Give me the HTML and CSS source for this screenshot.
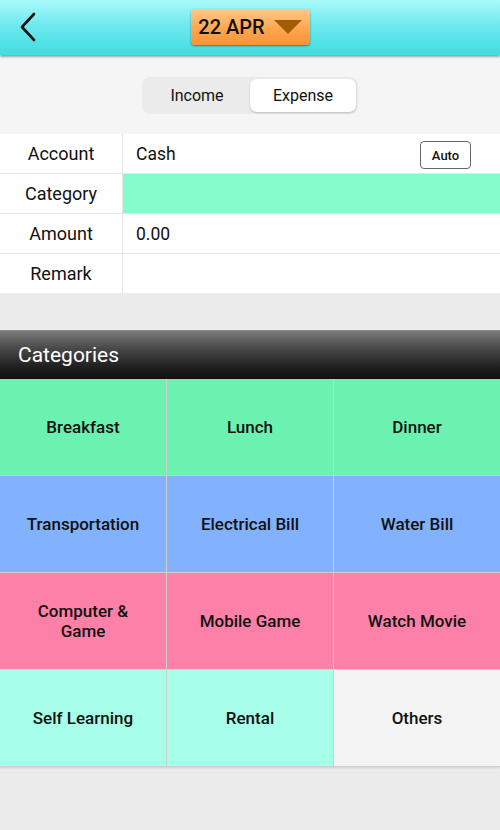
FILE: index.html
```html
<!DOCTYPE html>
<html>
<head>
<meta charset="utf-8">
<link rel="stylesheet" href="styles.css">
</head>
<body>
<div class="app">
  <header class="topbar">
    <div class="back">
      <svg width="20" height="30" viewBox="0 0 20 30"><path d="M16 2 L4 15 L16 28" fill="none" stroke="#111" stroke-width="2.6" stroke-linecap="round" stroke-linejoin="round"/></svg>
    </div>
    <div class="datebtn">
      <span>22 APR</span>
      <svg width="28" height="16" viewBox="0 0 28 16"><polygon points="0,1 28,1 14,15" fill="#a15d00"/></svg>
    </div>
  </header>
  <div class="segwrap">
    <div class="seg">
      <div class="segitem">Income</div>
      <div class="segitem active">Expense</div>
    </div>
  </div>
  <div class="form">
    <div class="row"><div class="label">Account</div><div class="value">Cash<span class="auto">Auto</span></div></div>
    <div class="row"><div class="label">Category</div><div class="value green"></div></div>
    <div class="row"><div class="label">Amount</div><div class="value">0.00</div></div>
    <div class="row last"><div class="label">Remark</div><div class="value"></div></div>
  </div>
  <div class="cathead">Categories</div>
  <div class="grid">
    <div class="cell c-green">Breakfast</div>
    <div class="cell c-green">Lunch</div>
    <div class="cell c-green">Dinner</div>
    <div class="cell c-blue">Transportation</div>
    <div class="cell c-blue">Electrical Bill</div>
    <div class="cell c-blue">Water Bill</div>
    <div class="cell c-pink">Computer &amp;<br>Game</div>
    <div class="cell c-pink">Mobile Game</div>
    <div class="cell c-pink">Watch Movie</div>
    <div class="cell c-mint">Self Learning</div>
    <div class="cell c-mint">Rental</div>
    <div class="cell c-gray">Others</div>
  </div>
</div>
</body>
</html>
```

FILE: styles.css
```css
* { box-sizing: border-box; }
html, body { margin: 0; padding: 0; }
body {
  width: 500px;
  height: 830px;
  background: #ebebeb;
  font-family: Roboto, "Liberation Sans", sans-serif;
  color: #111;
  overflow: hidden;
}
.app { width: 500px; }
.topbar {
  height: 55px;
  background: linear-gradient(to bottom, #a9fafa 0%, #6fe9ee 45%, #3fdde2 100%);
  box-shadow: 0 2px 2px rgba(0,0,0,0.35);
  display: flex;
  align-items: center;
  justify-content: center;
  position: relative;
  z-index: 2;
}
.back {
  position: absolute;
  left: 18px;
  top: 12px;
}
.datebtn {
  margin-top: -2px;
  width: 119px;
  height: 36px;
  border-radius: 4px;
  background: linear-gradient(to bottom, #ffc98a 0%, #ffa650 55%, #fb9235 100%);
  box-shadow: 0 1px 2px rgba(0,0,0,0.45);
  display: flex;
  align-items: center;
  justify-content: center;
  gap: 9px;
  font-size: 20px;
  font-weight: 500;
  color: #111;
}
.datebtn svg { margin-top: 1px; }
.segwrap {
  background: #f5f5f5;
  height: 79px;
  display: flex;
  justify-content: center;
  padding-top: 22px;
}
.seg {
  width: 216px;
  height: 37px;
  background: #ebebeb;
  border-radius: 8px;
  display: flex;
  padding: 2px;
}
.segitem {
  flex: 1;
  display: flex;
  align-items: center;
  justify-content: center;
  font-size: 16px;
  color: #111;
  border-radius: 7px;
}
.segitem.active {
  background: #fff;
  box-shadow: 0 1px 2px rgba(0,0,0,0.2);
}
.form {
  background: #fff;
}
.row {
  display: flex;
  height: 40px;
  border-bottom: 1px solid #e6e6e6;
}
.row.last { border-bottom: none; height: 39px; }
.label {
  width: 123px;
  border-right: 1px solid #e6e6e6;
  display: flex;
  align-items: center;
  justify-content: center;
  font-size: 18px;
}
.value {
  flex: 1;
  display: flex;
  align-items: center;
  padding-left: 13px;
  font-size: 17.5px;
  position: relative;
}
.value.green { background: #85fdca; }
.auto {
  position: absolute;
  left: 297px;
  top: 7px;
  width: 51px;
  height: 28px;
  border: 1.5px solid #666;
  border-radius: 4px;
  font-size: 13px;
  font-weight: 500;
  display: flex;
  align-items: center;
  justify-content: center;
}
.cathead {
  margin-top: 37px;
  height: 49px;
  background: linear-gradient(to bottom, #7a7a7a 0%, #4a4a4a 35%, #1f1f1f 75%, #111 100%);
  color: #fff;
  font-size: 21px;
  display: flex;
  align-items: center;
  padding-left: 18px;
  border-top: 1px solid #8a8a8a;
}
.grid {
  display: grid;
  grid-template-columns: 166px 166px 166px;
  grid-auto-rows: 96px;
  gap: 1px;
  background: #cfcfcf;
  border-bottom: 1px solid #cfcfcf;
  box-shadow: 0 1px 2px rgba(0,0,0,0.12);
}
.cell {
  display: flex;
  align-items: center;
  justify-content: center;
  text-align: center;
  font-size: 17px;
  font-weight: 500;
  line-height: 20px;
  color: #111;
}
.c-green { background: #6cf2b0; }
.c-blue { background: #82b1fd; }
.c-pink { background: #fd80a9; }
.c-mint { background: #a7fee9; }
.c-gray { background: #f4f4f4; }
```
